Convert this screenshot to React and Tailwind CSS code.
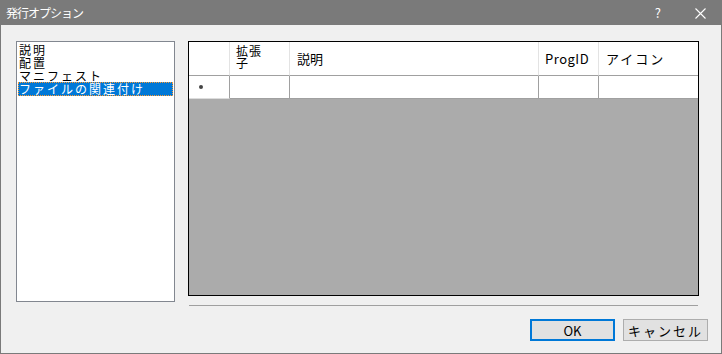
import React from 'react';

const ITEMS = ['説明', '配置', 'マニフェスト', 'ファイルの関連付け'];
const FONT = "font-['MS_Gothic','Noto_Sans_CJK_JP',sans-serif]";

export default function App() {
  return (
    <div className={`w-[722px] h-[354px] flex flex-col bg-[#f0f0f0] border-x border-b border-[#7a7a7a] ${FONT} text-black overflow-hidden`}>
      {/* Title bar */}
      <div className="h-[25px] -mx-px bg-[#7a7a7a] flex items-center pl-[6px] pr-[16px] text-white">
        <span className="text-[12px] leading-none tracking-[-1px]">発行オプション</span>
        <span className="ml-auto text-[13px] leading-none mr-[34px]">?</span>
        <svg width="11" height="11" viewBox="0 0 11 11" className="mt-[1px]">
          <path d="M0.5 0.5 L10.5 10.5 M10.5 0.5 L0.5 10.5" stroke="#ffffff" strokeWidth="1.1" />
        </svg>
      </div>

      {/* Body */}
      <div className="flex flex-col pt-[16px] pl-[15px] pr-[13px]">
        <div className="flex items-start">
          {/* List box */}
          <div className="w-[159px] h-[261px] bg-white border border-[#828790] pt-px">
            {ITEMS.map((it, i) => {
              const sel = i === ITEMS.length - 1;
              return (
                <div
                  key={it}
                  className={
                    sel
                      ? 'mx-px h-[14px] bg-[#0078d7] text-white border border-dotted border-[#ff9a30] text-[12px] leading-[12px] tracking-[2px] whitespace-nowrap'
                      : 'mx-px h-[13px] px-px text-[12px] leading-[13px] tracking-[2px] whitespace-nowrap'
                  }
                >
                  {it}
                </div>
              );
            })}
          </div>

          {/* Right column */}
          <div className="ml-[13px] w-[511px] flex flex-col">
            <div className="h-[255px] border border-black bg-[#ababab] flex flex-col">
              <div className="grid grid-cols-[41px_60px_249px_60px_99px] bg-white text-[13px]">
                <div className="h-[34px] border-r border-b border-r-[#e3e3e3] border-b-[#a0a0a0]" />
                <div className="h-[34px] border-r border-b border-r-[#e3e3e3] border-b-[#a0a0a0] pl-[6px] pt-[3px] text-[12px] leading-[12px] tracking-[1px]">
                  拡張<br />子
                </div>
                <div className="h-[34px] border-r border-b border-r-[#e3e3e3] border-b-[#a0a0a0] pl-[7px] flex items-center">説明</div>
                <div className="h-[34px] border-r border-b border-r-[#e3e3e3] border-b-[#a0a0a0] pl-[6px] flex items-center tracking-[0.5px]">ProgID</div>
                <div className="h-[34px] border-b border-b-[#a0a0a0] pl-[7px] flex items-center tracking-[2px]">アイコン</div>

                <div className="h-[23px] border-r border-b border-r-[#a0a0a0] border-b-[#dcdcdc] flex items-center pl-[10px]">
                  <span className="w-[4px] h-[4px] rounded-full bg-[#444]" />
                </div>
                <div className="h-[23px] border-r border-b border-[#a0a0a0]" />
                <div className="h-[23px] border-r border-b border-[#a0a0a0]" />
                <div className="h-[23px] border-r border-b border-[#a0a0a0]" />
                <div className="h-[23px] border-b border-[#a0a0a0]" />
              </div>
            </div>
            <div className="mt-[9px] mx-px h-px bg-[#a0a0a0]" />
          </div>
        </div>

        {/* Buttons */}
        <div className="mt-[13px] flex justify-end gap-[8px]">
          <button className="w-[85px] h-[22px] bg-[#e1e1e1] border-2 border-[#0078d7] text-[13px] leading-none">OK</button>
          <button className="w-[85px] h-[22px] bg-[#e1e1e1] border border-[#adadad] text-[13px] leading-none tracking-[2px]">キャンセル</button>
        </div>
      </div>
    </div>
  );
}
